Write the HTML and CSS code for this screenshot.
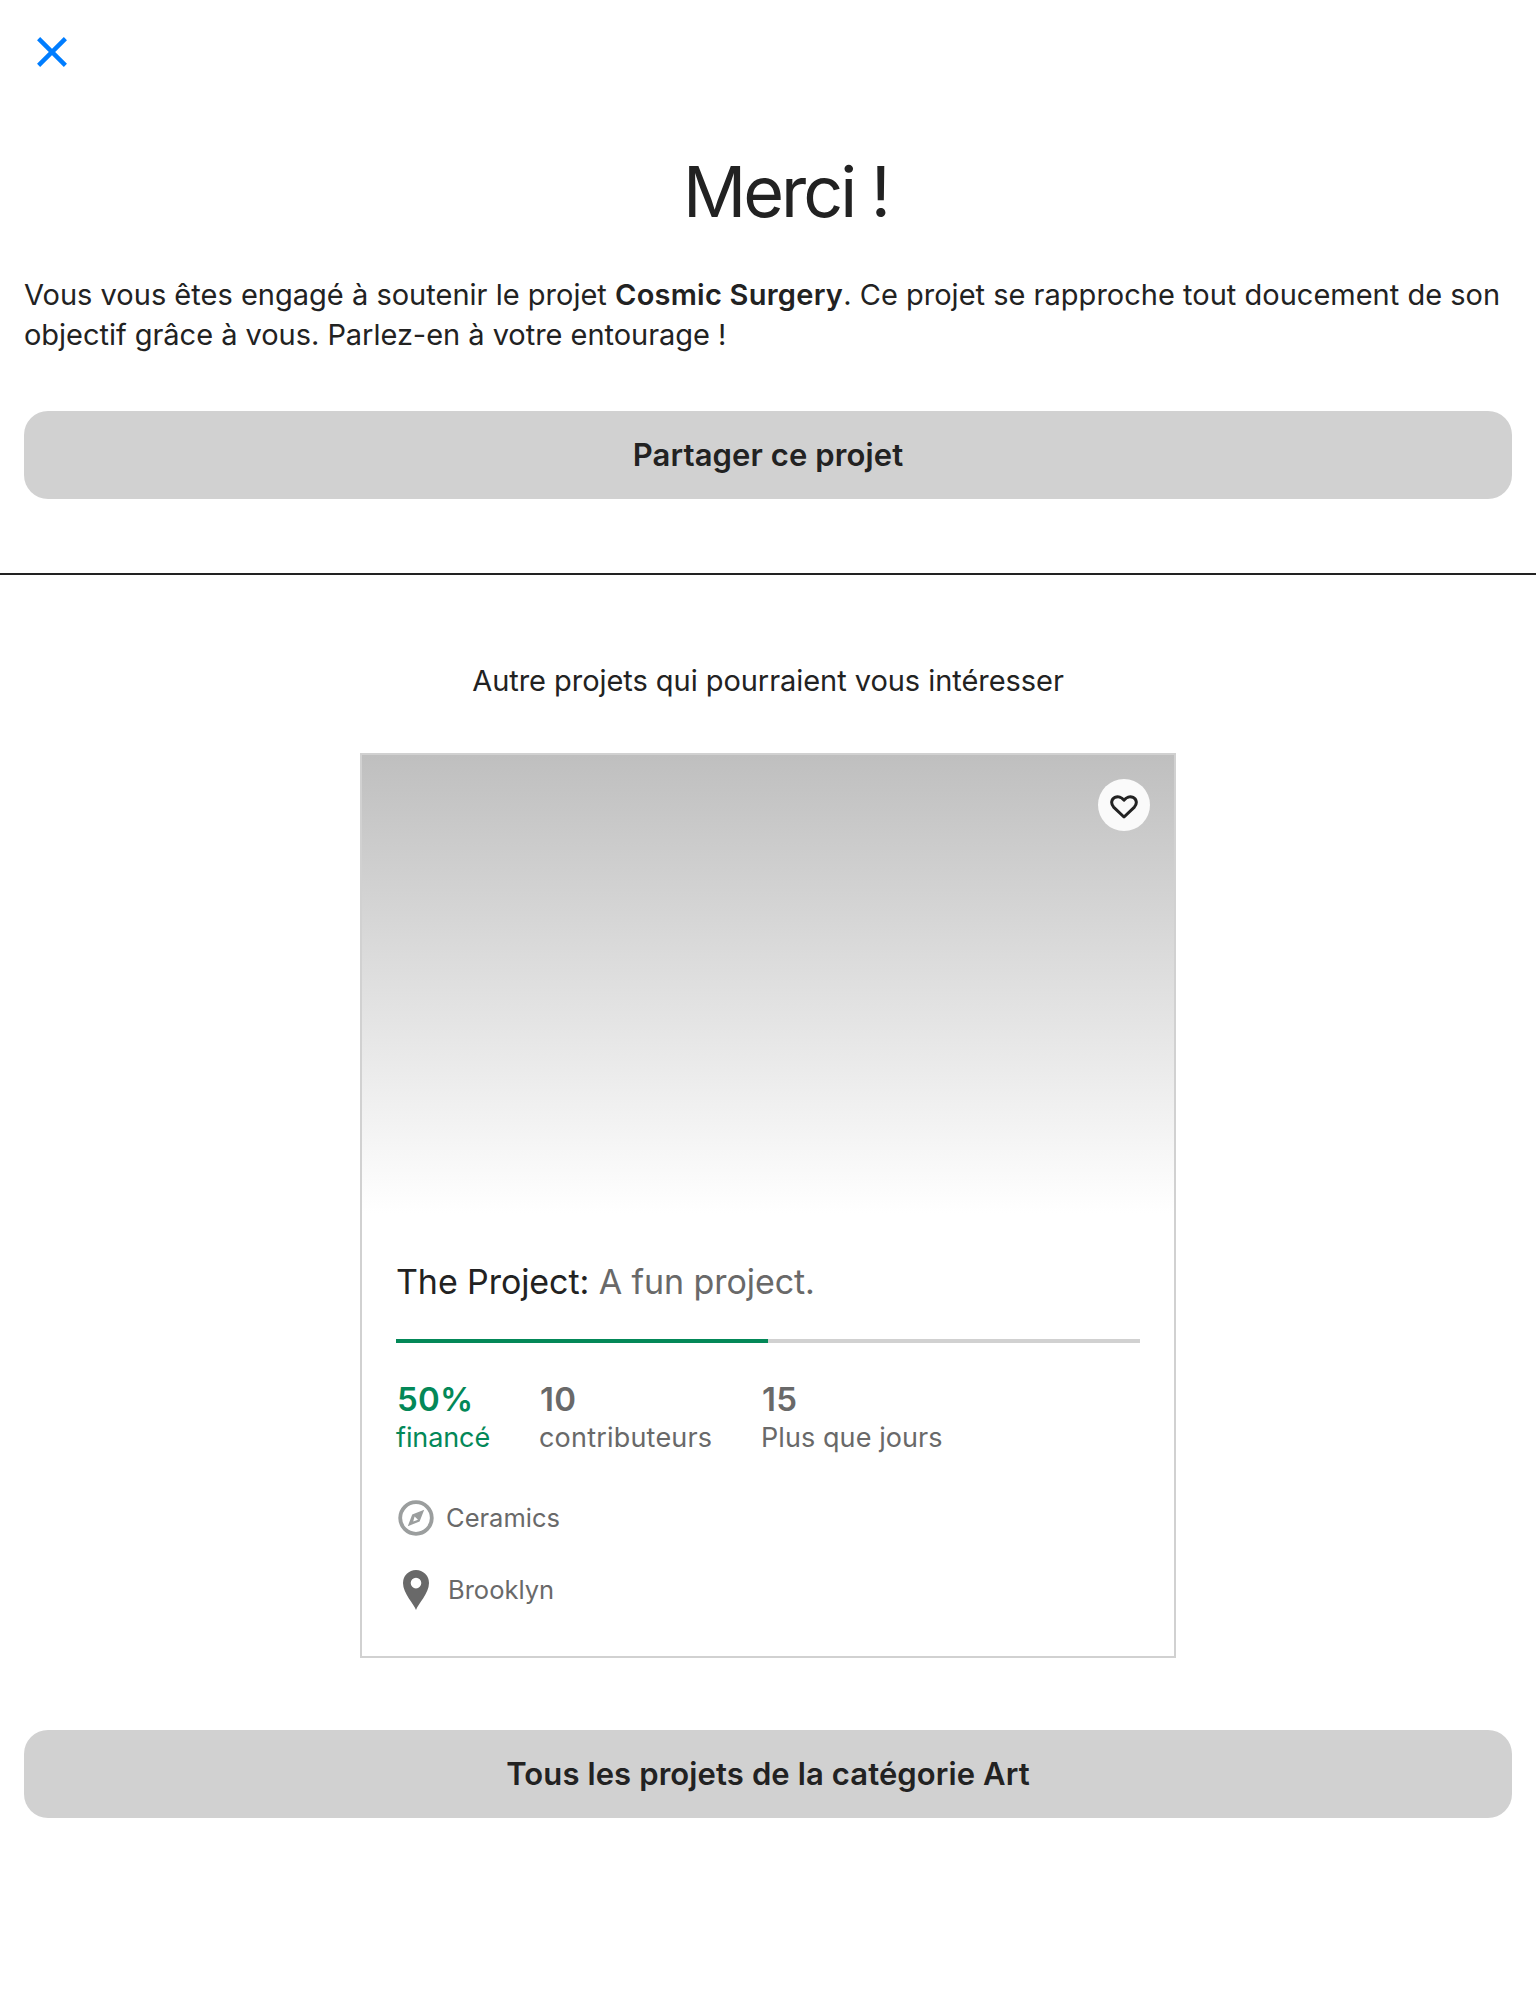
FILE: index.html
```html
<!DOCTYPE html>
<html lang="fr">
<head>
<meta charset="utf-8">
<title>Merci !</title>
<link rel="stylesheet" href="styles.css">
</head>
<body>
<header class="topbar">
  <svg class="close" viewBox="0 0 32 32" role="img" aria-label="Fermer"><path d="M2.6 2.6 29.4 29.4M29.4 2.6 2.6 29.4"/></svg>
</header>
<main>
  <section class="thanks">
    <h1 class="thanks-title">Merci !</h1>
    <p class="thanks-text">Vous vous êtes engagé à soutenir le projet <strong>Cosmic Surgery</strong>. Ce projet se rapproche tout doucement de son <span class="tight">objectif grâce à vous. Parlez-en à votre entourage !</span></p>
    <button class="button">Partager ce projet</button>
  </section>
  <hr class="divider">
  <section class="more">
    <h2 class="more-title">Autre projets qui pourraient vous intéresser</h2>
    <article class="card">
      <div class="card-image">
        <span class="save">
          <svg viewBox="0 0 28 24"><path d="M14 22 3.6 12.1C.4 8.6 1.5 4 4.9 2.4 8 1 11.8 2 14 5.2 16.2 2 20 1 23.1 2.4 26.5 4 27.6 8.6 24.4 12.1Z"/></svg>
        </span>
      </div>
      <div class="card-body">
        <h3 class="card-title">The Project: <span class="blurb">A fun project.</span></h3>
        <div class="progress"><div class="progress-fill" style="width:50%"></div></div>
        <div class="stats">
          <div class="funded"><div class="stat-value">50%</div><div class="stat-label">financé</div></div>
          <div><div class="stat-value">10</div><div class="stat-label wide">contributeurs</div></div>
          <div><div class="stat-value">15</div><div class="stat-label">Plus que jours</div></div>
        </div>
        <div class="meta">
          <svg class="compass" viewBox="0 0 36 36"><circle cx="18" cy="18" r="15.8"/><path fill-rule="evenodd" d="M26.2 9.8 21.6 21.6 9.8 26.2 14.2 14.6ZM16.6 16.6 15.2 21.4 20 19.8Z"/></svg>
          <span>Ceramics</span>
        </div>
        <div class="meta place">
          <svg class="pin" viewBox="0 0 26 40"><path fill-rule="evenodd" d="M13 40C11 34 0 23.5 0 13A13 13 0 0 1 26 13C26 23.5 15 34 13 40ZM13 7.8A5.3 5.3 0 1 0 13 18.4 5.3 5.3 0 0 0 13 7.8Z"/></svg>
          <span>Brooklyn</span>
        </div>
      </div>
    </article>
    <button class="button">Tous les projets de la catégorie Art</button>
  </section>
</main>
</body>
</html>
```
FILE: styles.css
```css
* { box-sizing: border-box; }

body {
  margin: 0;
  min-height: 2000px;
  background: #fff;
  color: #222;
  font-family: Inter, "Liberation Sans", sans-serif;
}

h1, h2, h3, p { margin: 0; font-weight: 400; }
svg { display: block; flex: none; }

.topbar { height: 150px; padding: 36px; }
.close { width: 32px; height: 32px; fill: none; stroke: #007dff; stroke-width: 4.4; }

.thanks { padding: 0 24px 74px; }
.thanks-title {
  padding-left: 35px;
  font-size: 70px;
  line-height: 84px;
  letter-spacing: -3px;
  text-align: center;
}
.thanks-text { margin: 41px 0 56px; font-size: 29px; line-height: 40px; letter-spacing: .01px; }
.thanks-text strong { font-weight: 600; letter-spacing: .25px; }
.tight { letter-spacing: -.035px; }

.button {
  display: block;
  width: 100%;
  height: 88px;
  padding: 0;
  border: 0;
  border-radius: 24px;
  background: #d1d1d1;
  color: #222;
  font: 600 31px/40px Inter, "Liberation Sans", sans-serif;
  letter-spacing: .11px;
}

.divider { height: 2px; margin: 0; border: 0; background: #222; }

.more { padding: 86px 24px 0; }
.more-title { font-size: 29px; line-height: 40px; letter-spacing: -.05px; text-align: center; }

.card { width: 816px; margin: 52px auto 72px; border: 2px solid #d1d1d1; }
.card-image {
  display: flex;
  justify-content: flex-end;
  align-items: flex-start;
  height: 458px;
  padding: 24px;
  background: linear-gradient(#bfbfbf, #fff);
}
.save { display: grid; place-items: center; width: 52px; height: 52px; border-radius: 50%; background: #fafafa; }
.save svg { width: 28px; height: 24px; margin-top: 3px; fill: none; stroke: #222; stroke-width: 3; stroke-linejoin: round; }

.card-body { padding: 48px 34px 46px; }
.card-title { font-size: 34px; line-height: 42px; letter-spacing: -.08px; }
.blurb { color: #696969; }

.progress { height: 4px; margin: 36px 0; background: #d1d1d1; }
.progress-fill { height: 100%; background: #038858; }

.stats { display: grid; grid-template-columns: 143px 222px auto; color: #696969; }
.stat-value { padding-left: 1px; font-size: 33px; font-weight: 600; line-height: 40px; letter-spacing: .2px; }
.stat-label { font-size: 27px; line-height: 36px; padding-top: 1px; letter-spacing: .08px; }
.wide { letter-spacing: .2px; }
.funded { color: #038858; }
.funded .stat-label { letter-spacing: -.1px; }

.meta { display: flex; align-items: center; gap: 12px; height: 36px; margin-top: 44px; padding-left: 2px; color: #696969; font-size: 25.5px; line-height: 36px; }
.compass { width: 36px; height: 36px; fill: #9b9e9e; }
.compass circle { fill: none; stroke: #9b9e9e; stroke-width: 3.8; }
.place { gap: 19.5px; height: 40px; margin-top: 34px; padding-left: 6.5px; }
.pin { width: 26px; height: 40px; fill: #696969; }
```
